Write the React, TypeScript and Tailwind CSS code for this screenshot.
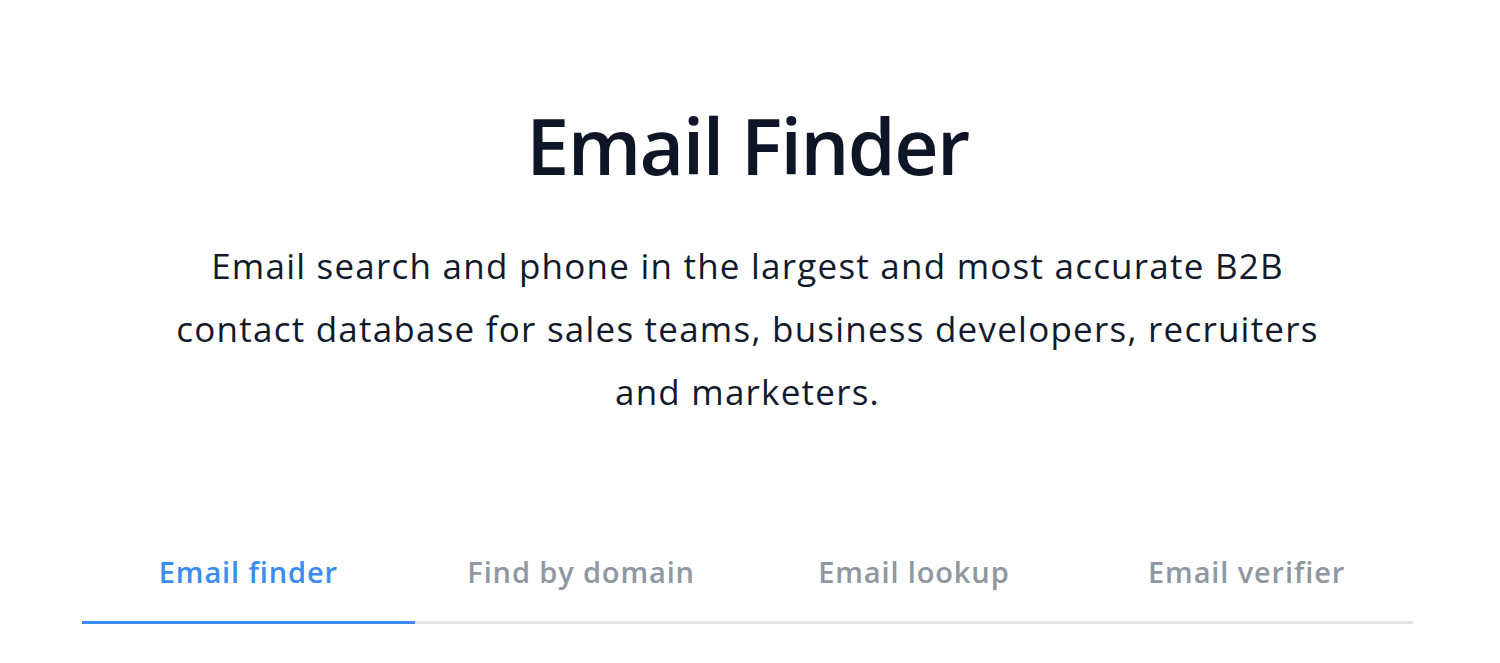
const tabs = ["Email finder", "Find by domain", "Email lookup", "Email verifier"];

export default function App() {
  return (
    <div className="min-h-[663px] bg-white pr-[5px]" style={{ fontFamily: "'Open Sans', 'Noto Sans', sans-serif" }}>
      <section className="flex flex-col items-center pt-[99px]">
        <h1 className="text-[77px] leading-[94px] font-semibold tracking-[-0.02em] text-[#0d1526]">Email Finder</h1>
        <p className="mt-[41px] max-w-[1170px] text-center text-[35px] leading-[63px] tracking-[0.035em] text-[#111a2c]">
          Email search and phone in the largest and most accurate B2B contact database for sales teams, business developers, recruiters and marketers.
        </p>
        <nav className="mt-[131px] grid w-[1331px] grid-cols-4">
          {tabs.map((t, i) => (
            <button
              key={t}
              className={
                i === 0
                  ? "border-b-[3px] border-[#3b8bf6] pb-[31px] text-[29px] leading-[36px] font-semibold tracking-[0.03em] text-[#3b8bf6]"
                  : "border-b-[3px] border-[#e3e5e9] pb-[31px] text-[29px] leading-[36px] font-semibold tracking-[0.03em] text-[#8f97a2]"
              }
            >
              {t}
            </button>
          ))}
        </nav>
      </section>
    </div>
  );
}
